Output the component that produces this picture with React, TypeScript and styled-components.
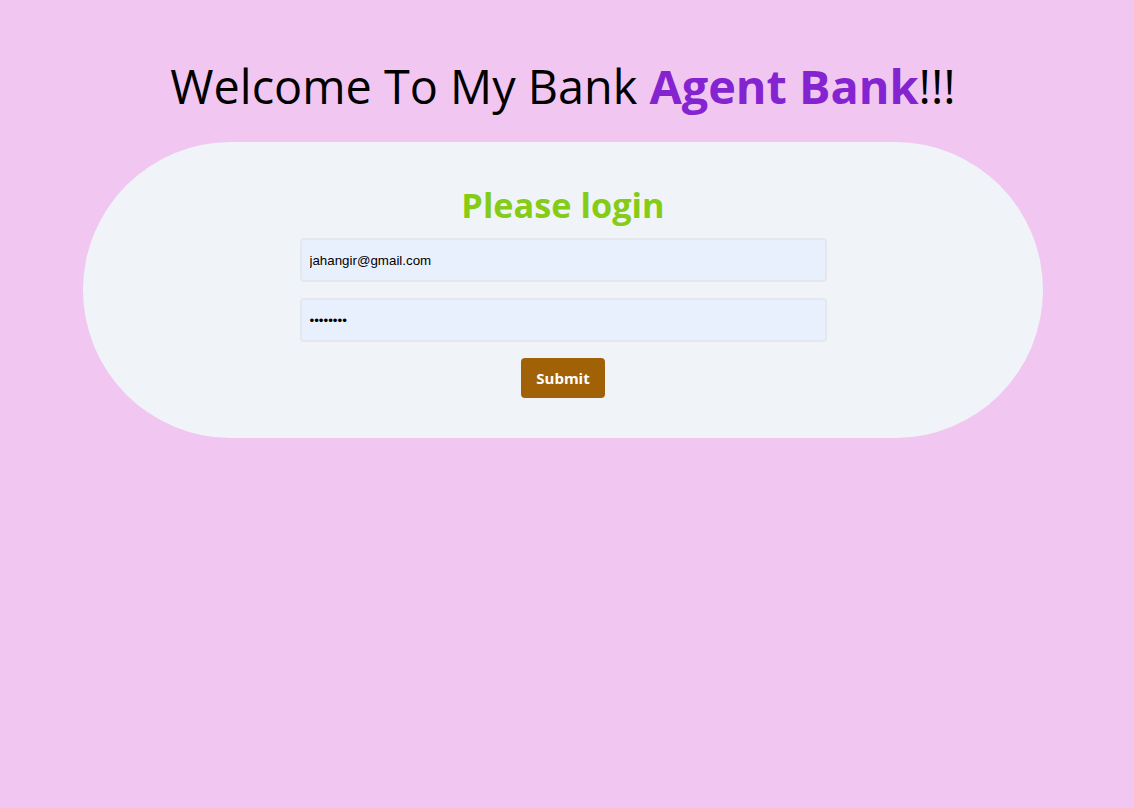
import React, { useState } from "react";
import styled, { createGlobalStyle } from "styled-components";

const GlobalStyle = createGlobalStyle`
  html, body {
    margin: 0;
    padding: 0;
    background-color: #f1c6f1;
  }
  * {
    box-sizing: border-box;
  }
`;

const App = () => {
  const [email, setEmail] = useState("jahangir@gmail.com");
  const [password, setPassword] = useState("12345678");

  return (
    <>
      <GlobalStyle />
      <Page>
        <Title>
          Welcome To My Bank <span>Agent Bank</span>!!!
        </Title>
        <Card>
          <Heading>Please login</Heading>
          <Form onSubmit={(e) => e.preventDefault()}>
            <Input
              type="email"
              name="email"
              value={email}
              onChange={(e) => setEmail(e.target.value)}
            />
            <Input
              type="password"
              name="password"
              value={password}
              onChange={(e) => setPassword(e.target.value)}
            />
            <SubmitButton type="submit">Submit</SubmitButton>
          </Form>
        </Card>
      </Page>
    </>
  );
};

const Page = styled.div`
  min-height: 100vh;
  width: 1126px;
  display: flex;
  flex-direction: column;
  align-items: center;
  padding-top: 57px;
  font-family: "Open Sans", "Noto Sans", sans-serif;
`;

const Title = styled.h1`
  margin: 0 0 27px;
  font-size: 46.8px;
  line-height: 58px;
  font-weight: 400;
  color: #000;
  span {
    color: #8424d0;
    font-weight: 700;
  }
`;

const Card = styled.div`
  width: 960px;
  height: 296px;
  border-radius: 148px;
  background-color: #f0f4f9;
  display: flex;
  flex-direction: column;
  align-items: center;
  padding-top: 40px;
`;

const Heading = styled.h2`
  margin: 0 0 10px;
  font-size: 34.3px;
  line-height: 46px;
  font-weight: 700;
  color: #84cc16;
`;

const Form = styled.form`
  display: flex;
  flex-direction: column;
  align-items: center;
  gap: 16px;
`;

const Input = styled.input`
  width: 527px;
  height: 44px;
  padding: 0 8px;
  border: 2px solid #e4e7ec;
  border-radius: 4px;
  background-color: #e8f0fe;
  font-family: "Liberation Sans", Arial, sans-serif;
  font-size: 13.33px;
  color: #000;
  outline: none;
`;

const SubmitButton = styled.button`
  width: 84px;
  height: 40px;
  border: none;
  border-radius: 4px;
  background-color: #a16207;
  color: #fff;
  font-family: "Open Sans", "Noto Sans", sans-serif;
  font-size: 15px;
  font-weight: 700;
  cursor: pointer;
`;

export default App;
